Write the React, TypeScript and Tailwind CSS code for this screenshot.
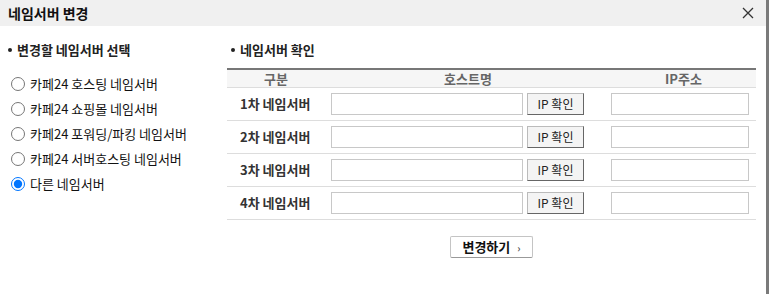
import React from 'react';

const options = [
    '카페24 호스팅 네임서버',
    '카페24 쇼핑몰 네임서버',
    '카페24 포워딩/파킹 네임서버',
    '카페24 서버호스팅 네임서버',
    '다른 네임서버',
];

const rows = ['1차 네임서버', '2차 네임서버', '3차 네임서버', '4차 네임서버'];

function Heading({ text }: { text: string }) {
    return (
        <div className="flex items-center h-5 text-[13px] font-bold text-[#222]">
            <span className="w-[4px] h-[4px] rounded-full bg-[#222] mr-[5px]" />
            {text}
        </div>
    );
}

export default function App() {
    return (
        <div
            className="relative w-[769px] h-[294px] bg-white overflow-hidden"
            style={{ fontFamily: '"Noto Sans CJK KR", "Noto Sans", sans-serif' }}
        >
            <div className="absolute right-0 top-0 w-[3px] h-full bg-[#7a7a7a]" />

            <div className="flex items-center justify-between h-[26px] w-[766px] bg-[#f0f0f0] pl-[8px] pr-[12px]">
                <h1 className="text-[14px] font-bold text-[#111]">네임서버 변경</h1>
                <svg width="12" height="12" viewBox="0 0 12 12" className="text-[#333]">
                    <path d="M1 1 L11 11 M11 1 L1 11" stroke="currentColor" strokeWidth="1.3" />
                </svg>
            </div>

            <div className="flex pt-[14px]">
                <div className="w-[227px] pl-[8px]">
                    <Heading text="변경할 네임서버 선택" />
                    <div className="flex flex-col mt-[13px] gap-[4px]">
                        {options.map((o, i) => (
                            <label key={o} className="flex items-center h-[21px] text-[13px] text-[#111]">
                                <input
                                    type="radio"
                                    name="ns"
                                    defaultChecked={i === 4}
                                    className="w-[14px] h-[14px] m-0 ml-[3px] mr-[5px]"
                                />
                                {o}
                            </label>
                        ))}
                    </div>
                </div>

                <div className="w-[529px] pl-[4px]">
                    <Heading text="네임서버 확인" />
                    <div className="mt-[8px] w-[529px] -ml-[4px] border-t-2 border-[#777]">
                        <div className="flex h-[18px] items-center bg-[#f6f6f6] border-b border-[#ddd] text-[13px] font-bold text-[#666]">
                            <span className="w-[98px] text-center">구분</span>
                            <span className="w-[286px] text-center">호스트명</span>
                            <span className="flex-1 text-center">IP주소</span>
                        </div>
                        {rows.map((r) => (
                            <div key={r} className="flex items-center h-[33px] border-b border-[#ddd]">
                                <span className="w-[104px] pl-[13px] text-[13px] font-bold text-[#333]">{r}</span>
                                <input className="w-[192px] h-[22px] border border-[#c8c8c8] bg-white" />
                                <button className="w-[57px] h-[22px] ml-[4px] border border-[#bbb] border-r-[#666] border-b-[#666] bg-[#f4f4f4] text-[12px] text-[#222]">
                                    IP 확인
                                </button>
                                <input className="w-[138px] h-[22px] ml-[27px] border border-[#c8c8c8] bg-white" />
                            </div>
                        ))}
                        <div className="flex justify-center mt-[16px]">
                            <button className="flex items-center gap-[7px] h-[22px] w-[83px] justify-center border border-[#c4c4c4] border-b-[#999] rounded-[2px] bg-white text-[13px] font-bold text-[#111]">
                                변경하기
                                <span className="text-[10px] font-bold text-[#555]">›</span>
                            </button>
                        </div>
                    </div>
                </div>
            </div>
        </div>
    );
}
